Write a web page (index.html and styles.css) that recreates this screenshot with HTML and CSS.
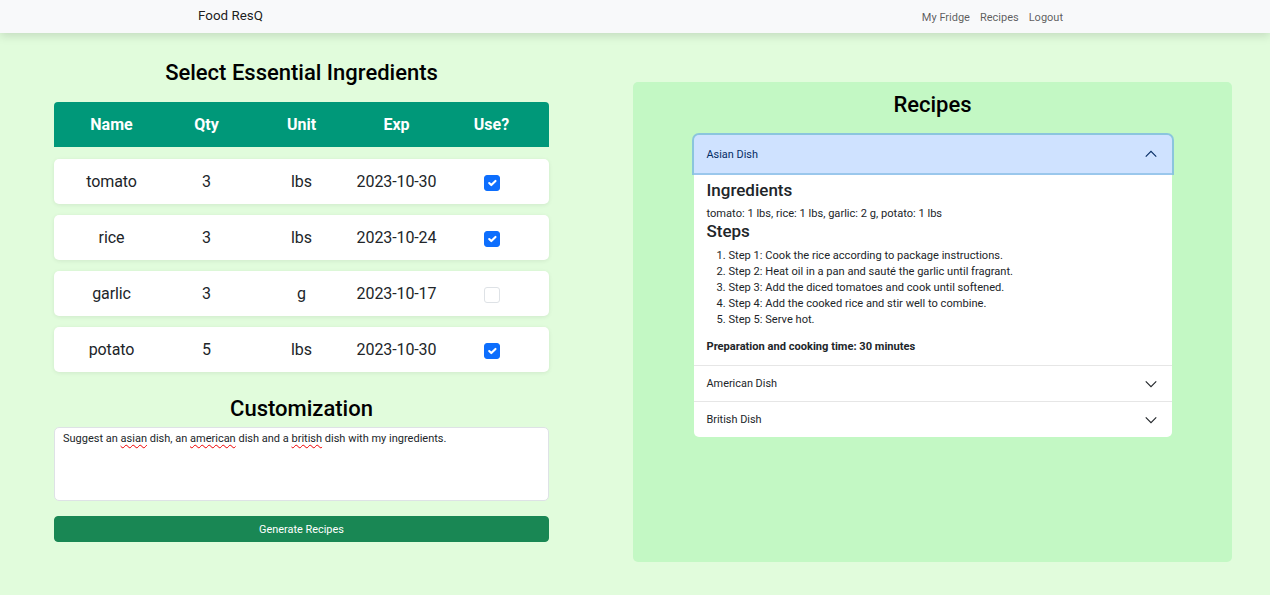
FILE: index.html
```html
<!DOCTYPE html>
<html lang="en">
<head>
<meta charset="utf-8">
<title>Food ResQ</title>
<link rel="stylesheet" href="styles.css">
</head>
<body>
<nav class="navbar">
  <div class="nav-inner">
    <a class="brand" href="#">Food ResQ</a>
    <ul class="nav-links">
      <li><a href="#">My Fridge</a></li>
      <li><a href="#">Recipes</a></li>
      <li><a href="#">Logout</a></li>
    </ul>
  </div>
</nav>
<main class="main">
  <section class="left">
    <h2 class="title">Select Essential Ingredients</h2>
    <div class="grid-row head">
      <div>Name</div><div>Qty</div><div>Unit</div><div>Exp</div><div>Use?</div>
    </div>
    <div class="grid-row item">
      <div>tomato</div><div>3</div><div>lbs</div><div>2023-10-30</div>
      <div><span class="check on"><svg viewBox="0 0 20 20" width="16" height="16"><path d="M6 10l3 3l6-6" fill="none" stroke="#fff" stroke-width="3" stroke-linecap="round" stroke-linejoin="round"/></svg></span></div>
    </div>
    <div class="grid-row item">
      <div>rice</div><div>3</div><div>lbs</div><div>2023-10-24</div>
      <div><span class="check on"><svg viewBox="0 0 20 20" width="16" height="16"><path d="M6 10l3 3l6-6" fill="none" stroke="#fff" stroke-width="3" stroke-linecap="round" stroke-linejoin="round"/></svg></span></div>
    </div>
    <div class="grid-row item">
      <div>garlic</div><div>3</div><div>g</div><div>2023-10-17</div>
      <div><span class="check"></span></div>
    </div>
    <div class="grid-row item">
      <div>potato</div><div>5</div><div>lbs</div><div>2023-10-30</div>
      <div><span class="check on"><svg viewBox="0 0 20 20" width="16" height="16"><path d="M6 10l3 3l6-6" fill="none" stroke="#fff" stroke-width="3" stroke-linecap="round" stroke-linejoin="round"/></svg></span></div>
    </div>
    <h2 class="title custom">Customization</h2>
    <div class="textarea">Suggest an <span class="sp">asian</span> dish, an <span class="sp">american</span> dish and a <span class="sp">british</span> dish with my ingredients.</div>
    <button class="btn">Generate Recipes</button>
  </section>
  <section class="right">
    <h2 class="title">Recipes</h2>
    <div class="accordion">
      <div class="acc-item">
        <div class="acc-head active">
          <span>Asian Dish</span>
          <svg width="14" height="14" viewBox="0 0 16 16"><path d="M2 11l6-6l6 6" fill="none" stroke="#052c65" stroke-width="1.3"/></svg>
        </div>
        <div class="acc-body">
          <h4>Ingredients</h4>
          <p class="ing">tomato: 1 lbs, rice: 1 lbs, garlic: 2 g, potato: 1 lbs</p>
          <h4 class="steps">Steps</h4>
          <ol>
            <li>Step 1: Cook the rice according to package instructions.</li>
            <li>Step 2: Heat oil in a pan and sauté the garlic until fragrant.</li>
            <li>Step 3: Add the diced tomatoes and cook until softened.</li>
            <li>Step 4: Add the cooked rice and stir well to combine.</li>
            <li>Step 5: Serve hot.</li>
          </ol>
          <p class="time">Preparation and cooking time: 30 minutes</p>
        </div>
      </div>
      <div class="acc-item">
        <div class="acc-head">
          <span>American Dish</span>
          <svg width="14" height="14" viewBox="0 0 16 16"><path d="M2 5l6 6l6-6" fill="none" stroke="#212529" stroke-width="1.3"/></svg>
        </div>
      </div>
      <div class="acc-item">
        <div class="acc-head">
          <span>British Dish</span>
          <svg width="14" height="14" viewBox="0 0 16 16"><path d="M2 5l6 6l6-6" fill="none" stroke="#212529" stroke-width="1.3"/></svg>
        </div>
      </div>
    </div>
  </section>
</main>
</body>
</html>
```
FILE: styles.css
```css
* { box-sizing: border-box; }
html, body { margin: 0; padding: 0; }
body {
  font-family: Roboto, "Open Sans", sans-serif;
  background: #e1fcdc;
  color: #212529;
  height: 595px;
  overflow: hidden;
}
.navbar {
  background: #f8f9fa;
  height: 33px;
  box-shadow: 0 3px 9px rgba(0,0,0,0.13);
  position: relative;
  z-index: 2;
}
.nav-inner {
  display: flex;
  align-items: center;
  justify-content: space-between;
  height: 33px;
  padding: 0 207px 2px 198px;
}
.brand {
  color: rgba(0,0,0,0.9);
  text-decoration: none;
  font-size: 13.4px;
}
.nav-links {
  display: flex;
  list-style: none;
  margin: 0;
  padding: 0;
  gap: 10px;
}
.nav-links a {
  color: rgba(0,0,0,0.65);
  text-decoration: none;
  font-size: 11px;
}
.main {
  display: flex;
  align-items: flex-start;
  padding: 0 38px 0 54px;
  gap: 84px;
}
.left {
  width: 495px;
  flex: none;
  padding-top: 24px;
}
.title {
  text-align: center;
  font-size: 22px;
  font-weight: 500;
  margin: 0 0 13px;
  line-height: 32px;
  color: #000;
}
.grid-row {
  display: grid;
  grid-template-columns: repeat(5, 95px);
  padding: 0 10px;
  align-items: center;
  text-align: center;
}
.grid-row.head {
  background: #009879;
  color: #fff;
  font-weight: 700;
  font-size: 16px;
  height: 45px;
  border-radius: 4px 4px 0 0;
  margin-bottom: 12px;
}
.grid-row.item {
  background: #fff;
  height: 45px;
  border-radius: 5px;
  font-size: 16px;
  letter-spacing: -0.1px;
  margin-bottom: 11px;
  box-shadow: 0 1px 4px rgba(0,0,0,0.08);
}
.check {
  display: inline-flex;
  width: 16px;
  height: 16px;
  border: 1px solid #dee2e6;
  border-radius: 3px;
  background: #fff;
  vertical-align: middle;
  align-items: center;
  justify-content: center;
}
.check.on {
  background: #0d6efd;
  border-color: #0d6efd;
}
.title.custom {
  margin-top: 21px;
  margin-bottom: 2px;
}
.textarea {
  background: #fff;
  border: 1px solid #dee2e6;
  border-radius: 5px;
  height: 74px;
  padding: 3px 8px;
  font-size: 11px;
  line-height: 16px;
}
.sp {
  text-decoration: underline wavy #e00;
  text-decoration-thickness: 1px;
  text-underline-offset: 2px;
}
.btn {
  display: block;
  width: 100%;
  margin-top: 15px;
  height: 26px;
  background: #198754;
  color: #fff;
  border: 1px solid #198754;
  border-radius: 4px;
  font-family: inherit;
  font-size: 10.9px;
}
.right {
  width: 599px;
  flex: none;
  margin-top: 49px;
  height: 480px;
  background: #c3f8c4;
  border-radius: 5px;
  padding-top: 7px;
}
.right .title {
  margin-bottom: 14px;
}
.accordion {
  width: 478px;
  margin: 0 auto;
  background: #fff;
  border-radius: 5px;
}
.acc-item + .acc-item { border-top: 1px solid #e6e6e6; }
.acc-head {
  display: flex;
  align-items: center;
  justify-content: space-between;
  height: 35px;
  padding: 0 14px 0 13px;
  font-size: 10.9px;
  color: #212529;
}
.acc-head.active {
  height: 38px;
  background: #cfe2ff;
  color: #052c65;
  border-radius: 5px 5px 0 0;
  box-shadow: 0 0 0 2px rgba(120,180,230,0.75);
  position: relative;
}
.acc-body {
  padding: 7px 13px 10px;
  font-size: 11.1px;
}
.acc-body h4 {
  margin: 0;
  font-size: 17px;
  font-weight: 500;
  line-height: 21px;
}
.acc-body h4.steps {
  margin-top: -1px;
}
.acc-body .ing {
  margin: 5px 0 0;
  line-height: 16px;
}
.acc-body ol {
  margin: 6px 0 0;
  padding-left: 22px;
  line-height: 16px;
}
.acc-body .time {
  font-weight: 700;
  margin: 11px 0 0;
  line-height: 16px;
}
```
